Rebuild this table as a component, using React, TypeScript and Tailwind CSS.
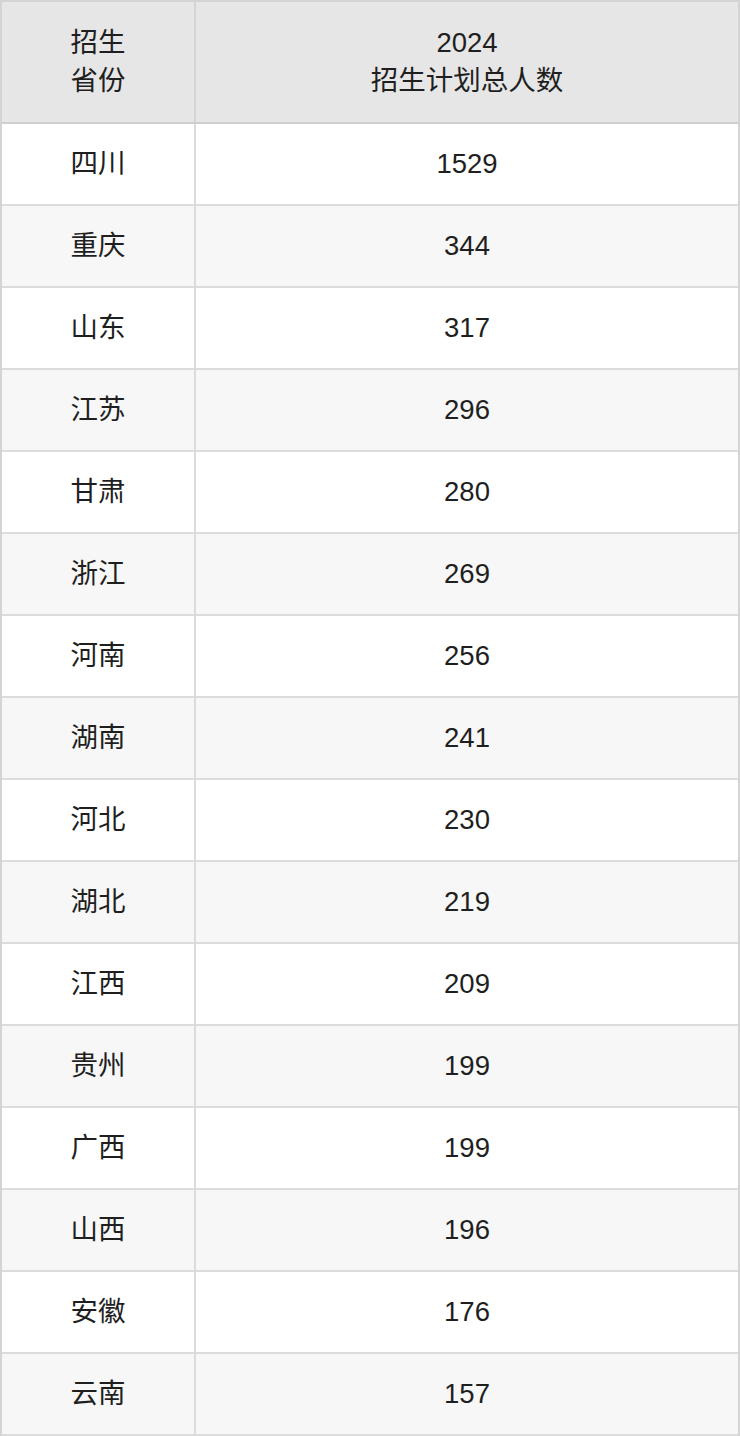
import React from "react";

const rows: [string, string][] = [
  ["四川", "1529"],
  ["重庆", "344"],
  ["山东", "317"],
  ["江苏", "296"],
  ["甘肃", "280"],
  ["浙江", "269"],
  ["河南", "256"],
  ["湖南", "241"],
  ["河北", "230"],
  ["湖北", "219"],
  ["江西", "209"],
  ["贵州", "199"],
  ["广西", "199"],
  ["山西", "196"],
  ["安徽", "176"],
  ["云南", "157"],
];

export default function App() {
  return (
    <div
      className="w-[740px] bg-white text-[#1f1f1f] text-[27.5px] leading-[38px]"
      style={{ fontFamily: '"Liberation Sans", Arial, "Noto Sans CJK SC", sans-serif' }}
    >
      <div className="border-2 border-[#d4d4d4] border-b-0">
        <div className="flex bg-[#e6e6e6] border-b-2 border-[#cfcfcf]">
          <div className="w-[194px] h-[120px] flex items-center justify-center text-center border-r-2 border-[#d4d4d4]">
            招生
            <br />
            省份
          </div>
          <div className="flex-1 h-[120px] flex items-center justify-center text-center">
            2024
            <br />
            招生计划总人数
          </div>
        </div>
        {rows.map(([p, n], i) => (
          <div
            key={i}
            className={`flex border-b-2 border-[#dcdcdc] ${i % 2 === 1 ? "bg-[#f7f7f7]" : "bg-white"}`}
          >
            <div className="w-[194px] h-[80px] flex items-center justify-center border-r-2 border-[#dcdcdc]">
              {p}
            </div>
            <div className="flex-1 h-[80px] flex items-center justify-center">{n}</div>
          </div>
        ))}
      </div>
    </div>
  );
}
